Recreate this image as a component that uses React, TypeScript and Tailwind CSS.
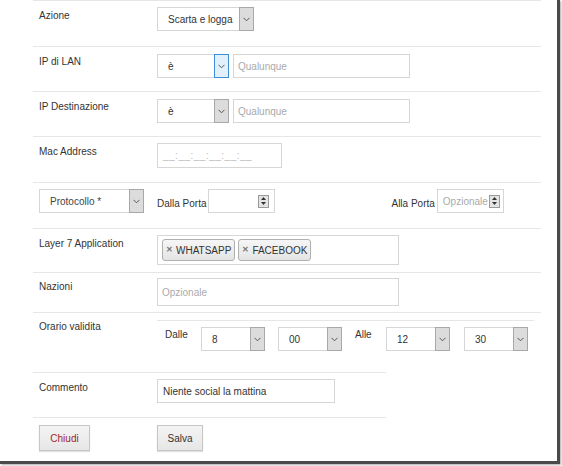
import { ReactNode } from "react";
import clsx from "clsx";

function Chevron() {
  return (
    <svg width="7" height="5" viewBox="0 0 7 5" fill="none">
      <path d="M0.5 0.8L3.5 3.8L6.5 0.8" stroke="#555" strokeWidth="1" />
    </svg>
  );
}

function Select({
  value,
  className,
  focused = false,
  muted = false,
}: {
  value: string;
  className: string;
  focused?: boolean;
  muted?: boolean;
}) {
  return (
    <div
      className={clsx(
        "flex h-[24px] items-stretch border border-[#d6d6d6] bg-white",
        className,
      )}
    >
      <span
        className={clsx(
          "flex flex-1 items-center pl-[10px] whitespace-nowrap",
          muted ? "text-[#444]" : "text-[#333]",
        )}
      >
        {value}
      </span>
      <span
        className={clsx(
          "-my-px -mr-px flex w-[15px] items-center justify-center border",
          focused
            ? "border-[#3d8fd8] bg-[#e2f0fb]"
            : "border-[#a8a8a8] bg-[#dcdcdc]",
        )}
      >
        <Chevron />
      </span>
    </div>
  );
}

function Spinner() {
  return (
    <span className="flex h-[13px] w-[11px] shrink-0 flex-col items-center justify-center gap-[2px] border border-[#9a9a9a] bg-[#e4e4e4]">
      <svg width="5" height="3" viewBox="0 0 5 3">
        <path d="M2.5 0L5 3H0Z" fill="#333" />
      </svg>
      <svg width="5" height="3" viewBox="0 0 5 3">
        <path d="M0 0H5L2.5 3Z" fill="#333" />
      </svg>
    </span>
  );
}

function Tag({ label }: { label: string }) {
  return (
    <span className="flex h-[22px] items-center gap-[3px] rounded-[3px] border border-[#b0b0b0] bg-gradient-to-b from-[#f6f6f6] to-[#e4e4e4] px-[3px] text-[#333]">
      <span className="text-[8px] leading-none font-bold text-[#777]">✕</span>
      {label}
    </span>
  );
}

function Row({
  label,
  className,
  labelClass = "pt-[9px]",
  children,
}: {
  label: string;
  className: string;
  labelClass?: string;
  children: ReactNode;
}) {
  return (
    <div className={clsx("flex border-t border-[#e6e6e6]", className)}>
      <div className={clsx("w-[124px] shrink-0 pl-[6px] leading-[12px] text-[#333]", labelClass)}>
        {label}
      </div>
      {children}
    </div>
  );
}

function Button({ label, className }: { label: string; className: string }) {
  return (
    <button
      className={clsx(
        "h-[26px] border border-[#c6c6c6] bg-gradient-to-b from-[#f4f4f4] to-[#e6e6e6] shadow-[0_1px_1px_rgba(0,0,0,0.12)]",
        className,
      )}
    >
      {label}
    </button>
  );
}

export default function App() {
  return (
    <div className="h-[466px] w-[562px] bg-white font-['Liberation_Sans',Arial,sans-serif] text-[10px]">
      <div className="h-[464px] w-[560px] border-r-[3px] border-b-[3px] border-[#4a4a4a] shadow-[1px_1px_2px_rgba(0,0,0,0.35)]">
        <div className="ml-[33px] w-[508px]">
          <Row label="Azione" className="h-[46px]">
            <div className="pt-[6px]">
              <Select value="Scarta e logga" className="w-[97px]" />
            </div>
          </Row>

          <Row label="IP di LAN" className="h-[45px]">
            <div className="flex gap-[4px] pt-[7px]">
              <Select value="è" className="w-[72px]" focused />
              <div className="flex h-[24px] w-[177px] items-center border border-[#d6d6d6] pl-[4px] text-[#aaa]">
                Qualunque
              </div>
            </div>
          </Row>

          <Row label="IP Destinazione" className="h-[45px]">
            <div className="flex gap-[4px] pt-[7px]">
              <Select value="è" className="w-[72px]" />
              <div className="flex h-[24px] w-[177px] items-center border border-[#d6d6d6] pl-[4px] text-[#aaa]">
                Qualunque
              </div>
            </div>
          </Row>

          <Row label="Mac Address" className="h-[46px]">
            <div className="pt-[6px]">
              <div className="flex h-[25px] w-[125px] items-center border border-[#d6d6d6] pl-[5px] tracking-[0.5px] text-[#bbb]">
                __:__:__:__:__:__
              </div>
            </div>
          </Row>

          <div className="flex h-[46px] items-start border-t border-[#e6e6e6] pt-[6px] pl-[6px]">
            <Select value="Protocollo *" className="w-[105px]" muted />
            <span className="mt-[9px] ml-[13px] leading-[12px] text-[#333]">
              Dalla Porta
            </span>
            <div className="ml-[2px] flex h-[24px] w-[67px] items-center justify-end border border-[#d6d6d6] pr-[5px]">
              <Spinner />
            </div>
            <span className="mt-[9px] ml-[116px] leading-[12px] text-[#333]">
              Alla Porta
            </span>
            <div className="ml-[2px] flex h-[24px] w-[67px] items-center border border-[#d6d6d6] pr-[3px] pl-[5px]">
              <span className="flex-1 overflow-hidden whitespace-nowrap text-[#aaa]">
                Opzionale
              </span>
              <Spinner />
            </div>
          </div>

          <Row label="Layer 7 Application" className="h-[44px]">
            <div className="pt-[6px]">
              <div className="flex h-[30px] w-[242px] items-center gap-[3px] border border-[#d6d6d6] pl-[4px]">
                <Tag label="WHATSAPP" />
                <Tag label="FACEBOOK" />
              </div>
            </div>
          </Row>

          <Row label="Nazioni" className="h-[40px]" labelClass="pt-[8px]">
            <div className="pt-[5px]">
              <div className="flex h-[28px] w-[242px] items-center border border-[#d6d6d6] pl-[4px] text-[#aaa]">
                Opzionale
              </div>
            </div>
          </Row>

          <Row label="Orario validita" className="h-[60px]" labelClass="pt-[8px]">
            <div className="mt-[7px] mr-[7px] flex flex-1 items-start border-t border-[#e6e6e6] pt-[6px]">
              <span className="w-[44px] pt-[2px] pl-[8px] leading-[12px] text-[#333]">
                Dalle
              </span>
              <Select value="8" className="w-[64px]" />
              <span className="w-[13px]" />
              <Select value="00" className="w-[64px]" />
              <span className="w-[44px] pt-[2px] pl-[13px] leading-[12px] text-[#333]">
                Alle
              </span>
              <Select value="12" className="w-[64px]" />
              <span className="w-[14px]" />
              <Select value="30" className="w-[64px]" />
            </div>
          </Row>

          <div className="w-[353px]">
            <Row label="Commento" className="h-[45px]">
              <div className="pt-[6px]">
                <div className="flex h-[24px] w-[178px] items-center border border-[#d6d6d6] pl-[5px] text-[#333]">
                  Niente social la mattina
                </div>
              </div>
            </Row>

            <div className="flex border-t border-[#e6e6e6] pt-[7px] pl-[6px]">
              <Button label="Chiudi" className="w-[51px] text-[#a3262a]" />
              <Button label="Salva" className="ml-[67px] w-[46px] text-[#333]" />
            </div>
          </div>
        </div>
      </div>
    </div>
  );
}
